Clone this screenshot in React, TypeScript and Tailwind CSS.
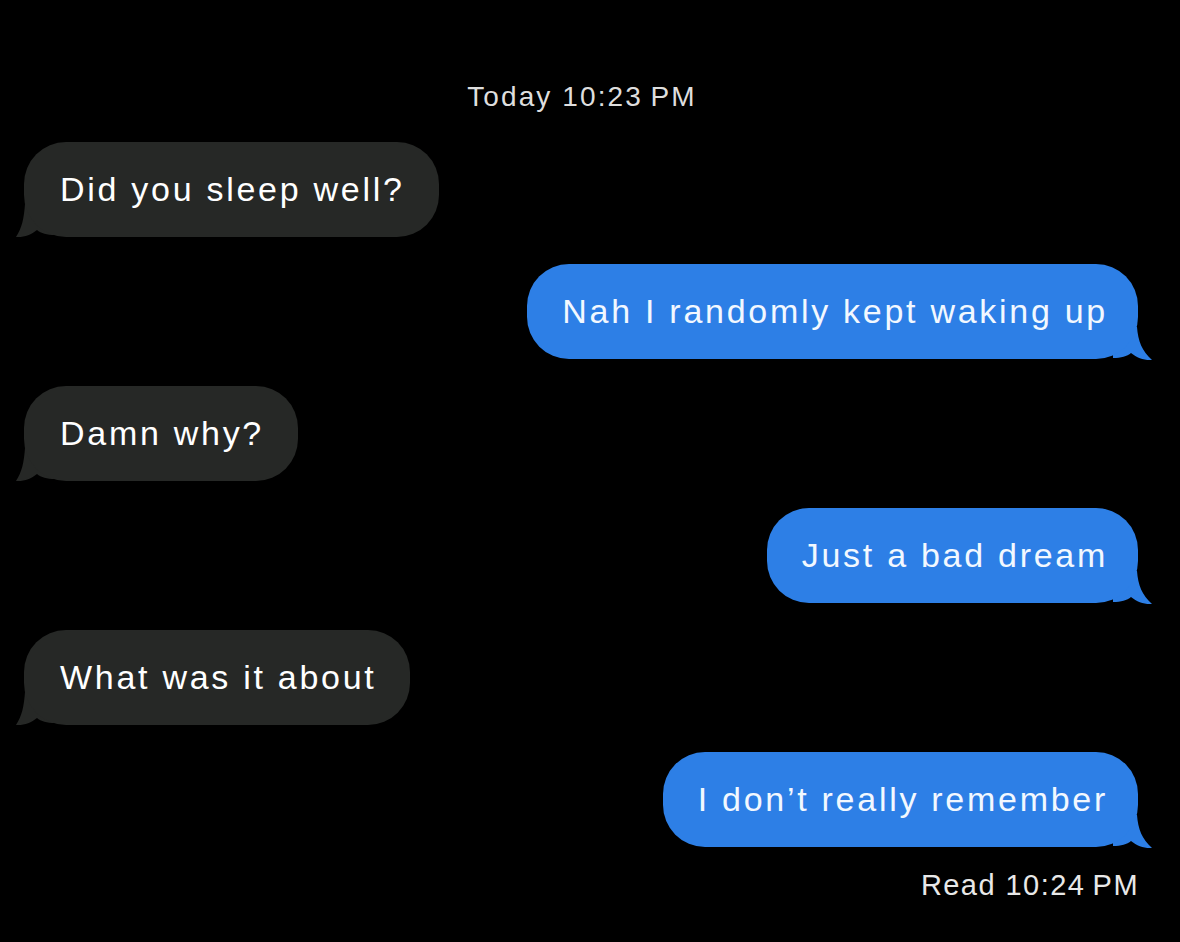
const font = { fontFamily: '"Liberation Sans", Arial, sans-serif' }

const messages = [
  { from: 'them', text: 'Did you sleep well?' },
  { from: 'me', text: 'Nah I randomly kept waking up' },
  { from: 'them', text: 'Damn why?' },
  { from: 'me', text: 'Just a bad dream' },
  { from: 'them', text: 'What was it about' },
  { from: 'me', text: 'I don\u2019t really remember' },
]

function TailRight() {
  return (
    <svg
      className="absolute right-[-15px] bottom-[-2px]"
      width="40"
      height="34"
      viewBox="0 0 40 34"
    >
      <path
        d="M0 30 L0 0 L24 0 C25 14 29 24 39 33 C31 33.5 24 31 18 26 C14 29.5 8 31 0 31 Z"
        fill="#2d7fe6"
      />
    </svg>
  )
}

function TailLeft() {
  return (
    <svg
      className="absolute left-[-9px] bottom-[-1px]"
      width="40"
      height="34"
      viewBox="0 0 40 34"
    >
      <path
        d="M40 30 L40 0 L10 0 C9 14 7 24 1 33 C9 33.5 16 31 22 26 C26 29.5 32 31 40 31 Z"
        fill="#262826"
      />
    </svg>
  )
}

function Bubble({ from, text }: { from: string; text: string }) {
  if (from === 'me') {
    return (
      <div className="flex justify-end pr-[42px]">
        <div className="relative">
          <TailRight />
          <div className="relative flex h-[95px] items-center rounded-[42px] bg-[#2d7fe6] pl-[35px] pr-[30px] text-[34px] tracking-[0.08em] text-[#f2f8ff]">
            {text}
          </div>
        </div>
      </div>
    )
  }
  return (
    <div className="flex justify-start pl-[24px]">
      <div className="relative">
        <TailLeft />
        <div className="relative flex h-[95px] items-center rounded-[42px] bg-[#262826] pl-[36px] pr-[34px] text-[34px] tracking-[0.08em] text-white">
          {text}
        </div>
      </div>
    </div>
  )
}

export default function App() {
  return (
    <div className="min-h-[942px] w-full bg-black" style={font}>
      <div className="flex flex-col pt-[79px]">
        <div className="pr-[16px] text-center text-[28px] leading-[36px] tracking-[0.075em] text-[#dedede]">
          Today 10:23&#8201;PM
        </div>
        <div className="mt-[27px] flex flex-col gap-[27px]">
          {messages.map((m, i) => (
            <Bubble key={i} from={m.from} text={m.text} />
          ))}
        </div>
        <div className="mt-[20px] pr-[41px] text-right text-[29px] leading-[36px] tracking-[0.05em] text-[#e8e8e8]">
          Read 10:24&#8201;PM
        </div>
      </div>
    </div>
  )
}
